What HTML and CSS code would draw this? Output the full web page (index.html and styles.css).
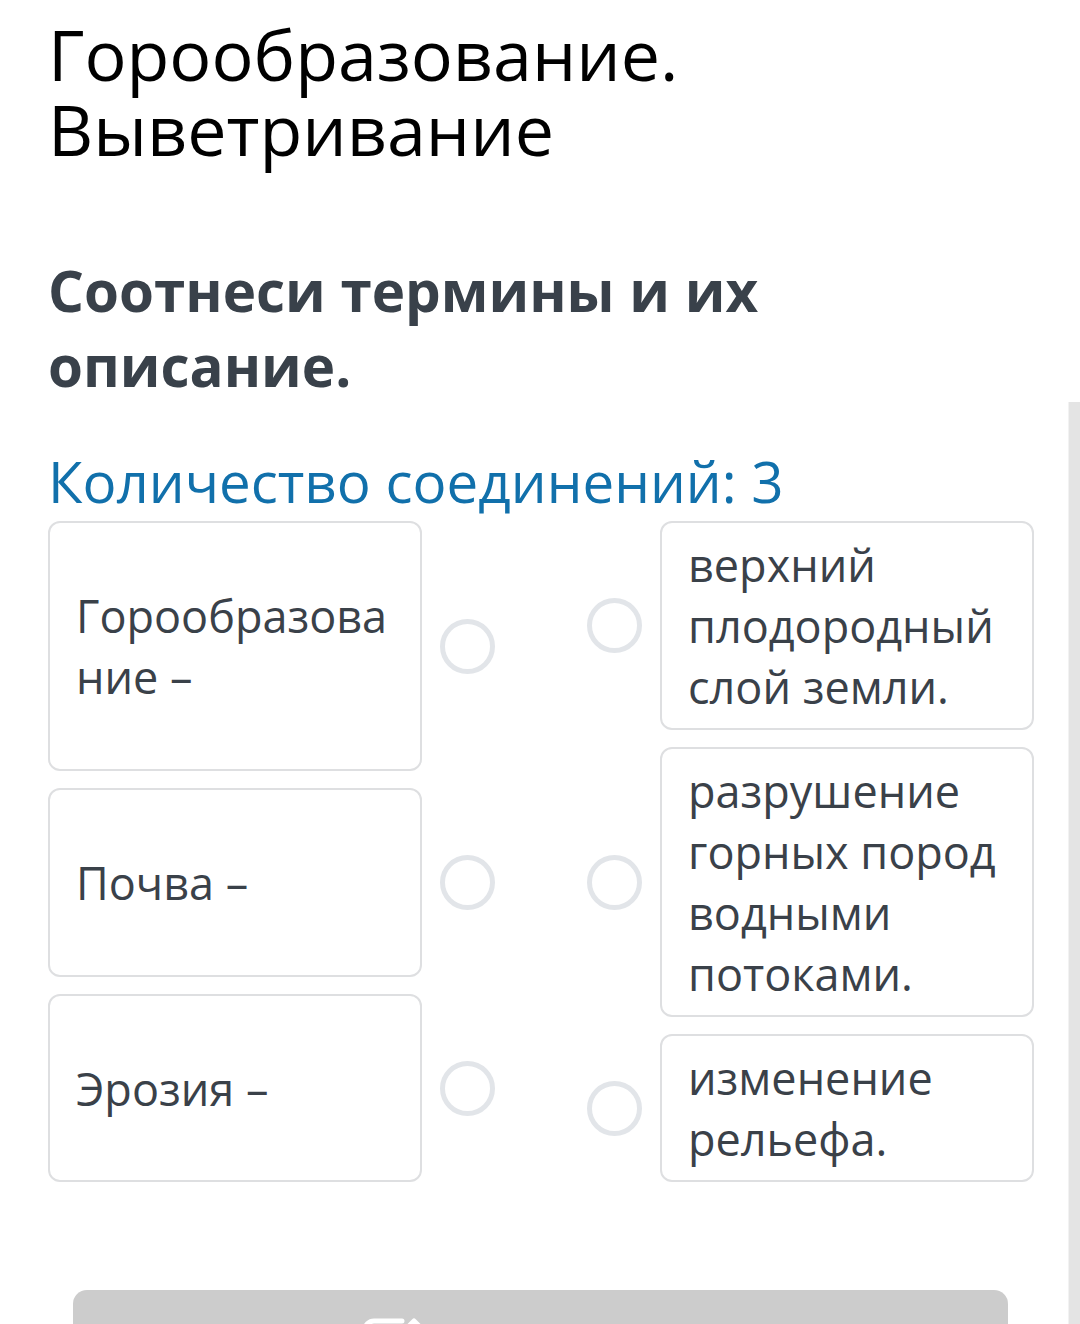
FILE: index.html
```html
<!DOCTYPE html>
<html lang="ru">
<head>
    <meta charset="UTF-8">
    <meta name="viewport" content="width=device-width, initial-scale=1.0">
    <title>Горообразование. Выветривание</title>
    <link rel="stylesheet" href="styles.css">
</head>
<body>
    <div class="page">
        <h1 class="lesson-title">Горообразование. Выветривание</h1>

        <h2 class="task-title">Соотнеси термины и их описание.</h2>

        <p class="task-count">Количество соединений: 3</p>

        <div class="match">
            <div class="match-col">
                <div class="match-item">
                    <div class="card card-term tall">Горообразова<br>ние –</div>
                    <span class="dot"></span>
                </div>
                <div class="match-item">
                    <div class="card card-term mid">Почва –</div>
                    <span class="dot"></span>
                </div>
                <div class="match-item">
                    <div class="card card-term short">Эрозия –</div>
                    <span class="dot"></span>
                </div>
            </div>

            <div class="match-col">
                <div class="match-item">
                    <span class="dot"></span>
                    <div class="card">верхний плодородный слой земли.</div>
                </div>
                <div class="match-item">
                    <span class="dot"></span>
                    <div class="card">разрушение горных пород водными потоками.</div>
                </div>
                <div class="match-item">
                    <span class="dot"></span>
                    <div class="card">изменение рельефа.</div>
                </div>
            </div>
        </div>

        <button type="button" class="check-btn" aria-label="Проверить">
            <svg width="64" height="60" viewBox="0 0 64 60" fill="none" stroke="#fff" stroke-width="5" stroke-linecap="round" stroke-linejoin="round">
                <path d="M40 3H12a9 9 0 0 0-9 9v36a9 9 0 0 0 9 9h36a9 9 0 0 0 9-9V30"/>
                <path d="M52 3l8 8-26 26H26v-8z"/>
            </svg>
        </button>
    </div>

    <div class="scrollbar"></div>
</body>
</html>
```

FILE: styles.css
```css
/* Reset */
* {
    margin: 0;
    padding: 0;
    box-sizing: border-box;
}

body {
    font-family: 'Open Sans', 'Noto Sans', sans-serif;
    background: #fff;
    color: #3a4149;
    overflow: hidden;
}

.page {
    padding: 17px 46px 0 48px;
}

.lesson-title {
    font-size: 70px;
    line-height: 75px;
    font-weight: 400;
    color: #000;
    width: 680px;
}

.task-title {
    margin-top: 86px;
    font-size: 56.5px;
    line-height: 75px;
    font-weight: 700;
    color: #39414a;
    width: 760px;
}

.task-count {
    margin-top: 43px;
    font-size: 56.5px;
    line-height: 72px;
    color: #1170ab;
}

/* Matching area */
.match {
    margin-top: 3px;
    display: flex;
    justify-content: space-between;
}

.match-col {
    display: flex;
    flex-direction: column;
    gap: 17px;
}

.match-item {
    display: flex;
    align-items: center;
    gap: 18px;
}

.card {
    width: 374px;
    border: 2px solid #dedfe1;
    border-radius: 12px;
    padding: 11px 24px 11px 26px;
    font-size: 45px;
    line-height: 61px;
    color: #3a4149;
}

.card-term {
    display: flex;
    align-items: center;
    padding-left: 26px;
}

.card-term.tall {
    height: 250px;
}

.card-term.mid {
    height: 189px;
}

.card-term.short {
    height: 188px;
}

.dot {
    width: 55px;
    height: 55px;
    border: 5px solid #e2e5e9;
    border-radius: 50%;
    flex-shrink: 0;
}

/* Check button */
.check-btn {
    display: flex;
    align-items: flex-start;
    width: 935px;
    height: 120px;
    margin: 108px 0 0 25px;
    padding: 28px 0 0 289px;
    background-color: #cccccc;
    border: none;
    border-radius: 14px;
}

.scrollbar {
    position: fixed;
    top: 402px;
    right: 0;
    width: 12px;
    bottom: 0;
    background: #e4e4e4;
    border-left: 1px solid #f2f2f2;
}
```
